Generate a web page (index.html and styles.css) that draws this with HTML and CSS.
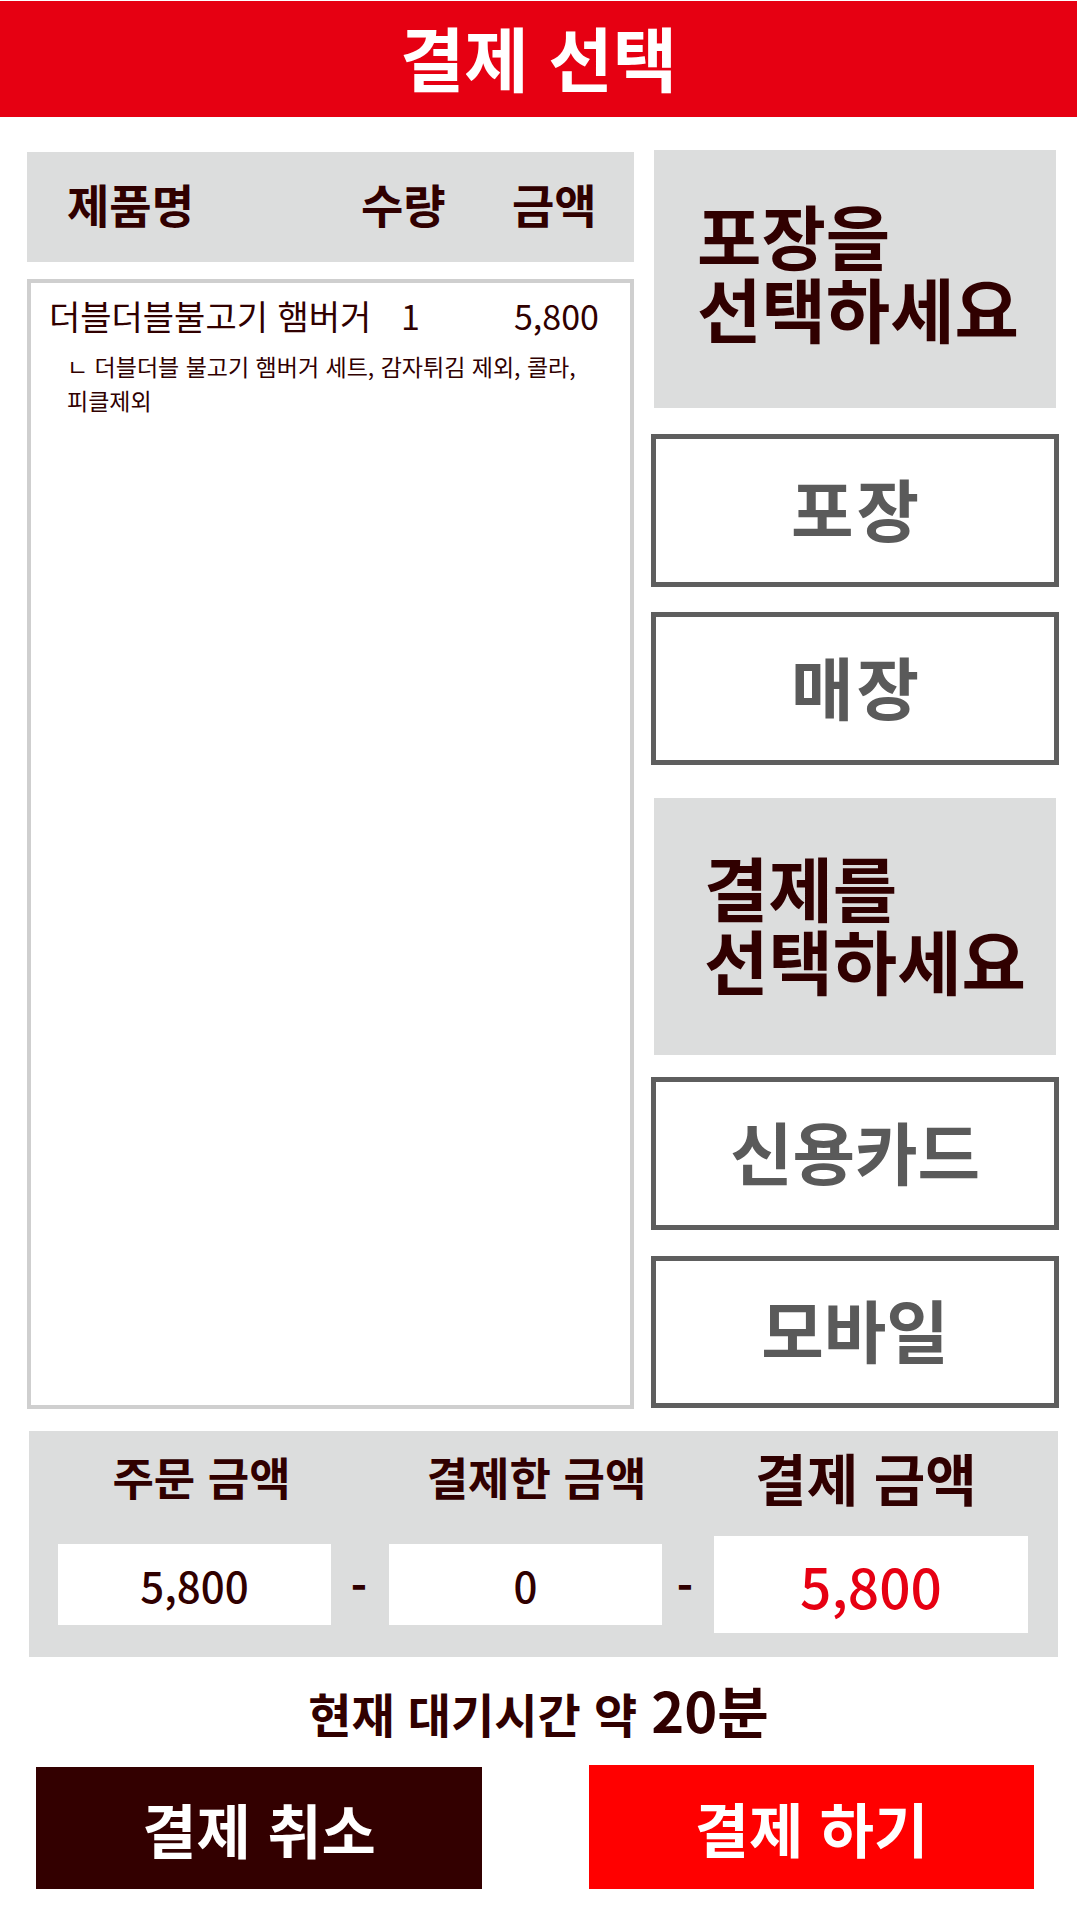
FILE: index.html
```html
<!DOCTYPE html>
<html lang="ko">
<head>
<meta charset="utf-8">
<title>결제 선택</title>
<link rel="stylesheet" href="styles.css">
</head>
<body>
<header class="topbar"><h1 class="title">결제 선택</h1></header>

<main class="main">
  <section class="order">
    <div class="thead">
      <span class="th-name">제품명</span>
      <span class="th-qty">수량</span>
      <span class="th-amt">금액</span>
    </div>
    <div class="list">
      <div class="item">
        <span class="it-name">더블더블불고기 햄버거</span>
        <span class="it-qty">1</span>
        <span class="it-amt">5,800</span>
      </div>
      <p class="item-sub">ㄴ 더블더블 불고기 햄버거 세트, 감자튀김 제외, 콜라, 피클제외</p>
    </div>
  </section>

  <section class="choices">
    <div class="prompt prompt-1">
      <span class="pl">포장을</span>
      <span class="pl">선택하세요</span>
    </div>
    <button class="opt opt-1">포장</button>
    <button class="opt opt-2">매장</button>
    <div class="prompt prompt-2">
      <span class="pl">결제를</span>
      <span class="pl">선택하세요</span>
    </div>
    <button class="opt opt-3">신용카드</button>
    <button class="opt opt-4">모바일</button>
  </section>
</main>

<section class="summary">
  <div class="lbl lbl-a">주문 금액</div>
  <div class="lbl lbl-b">결제한 금액</div>
  <div class="lbl lbl-c">결제 금액</div>
  <div class="val val-1">5,800</div>
  <div class="minus m1">-</div>
  <div class="val val-2">0</div>
  <div class="minus m2">-</div>
  <div class="val val-3">5,800</div>
</section>

<div class="wait"><span class="wait-txt">현재 대기시간 약</span> <span class="wait-big">20분</span></div>

<div class="actions">
  <button class="act act-cancel">결제 취소</button>
  <button class="act act-pay">결제 하기</button>
</div>
</body>
</html>
```

FILE: styles.css
```css
* { box-sizing: border-box; }
html, body { margin: 0; padding: 0; background: #ffffff; }
body {
  width: 1077px;
  font-family: "Noto Sans CJK KR", "Noto Sans", sans-serif;
  color: #300000;
}
button { font-family: inherit; cursor: pointer; padding: 0; }

.topbar {
  height: 116px;
  margin-top: 1px;
  padding-bottom: 4px;
  background: #e60012;
  display: flex;
  align-items: center;
  justify-content: center;
}
.title {
  margin: 0;
  color: #ffffff;
  font-size: 70px;
  font-weight: 700;
  line-height: 1;
}

.main {
  display: flex;
  gap: 17px;
  padding: 33px 0 0 27px;
}
.order {
  width: 607px;
  padding-top: 2px;
  display: flex;
  flex-direction: column;
  gap: 17px;
}
.thead {
  height: 110px;
  background: #dcdddd;
  display: grid;
  grid-template-columns: 294px 151px 1fr;
  align-items: center;
  padding: 0 0 8px 40px;
  font-size: 46px;
  font-weight: 700;
  line-height: 1;
}
.list {
  height: 1130px;
  border: 4px solid #cfcfcf;
  padding: 12px 0 0 18px;
}
.item {
  display: grid;
  grid-template-columns: 352px 113px 1fr;
  align-items: center;
  font-size: 34px;
  line-height: 42px;
}
.item-sub {
  margin: 12px 0 0 18px;
  width: 560px;
  font-size: 23px;
  line-height: 34px;
  word-break: keep-all;
}

.choices {
  width: 408px;
  display: flex;
  flex-direction: column;
}
.prompt {
  height: 258px;
  margin: 0 3px;
  background: #dcdddd;
  display: flex;
  flex-direction: column;
  justify-content: center;
  font-size: 70px;
  font-weight: 700;
}
.pl {
  display: block;
  height: 73px;
  line-height: 73px;
}
.prompt-1 { padding: 0 0 16px 43px; }
.prompt-2 { padding: 0 0 8px 50px; margin-top: 33px; height: 257px; }
.opt {
  height: 153px;
  background: #ffffff;
  border: 5px solid #5e5e5e;
  padding-bottom: 6px;
  color: #5a5a5a;
  font-size: 68px;
  font-weight: 700;
  line-height: 1;
  letter-spacing: 3px;
  text-indent: 3px;
}
.opt-1 { margin-top: 26px; }
.opt-2 { margin-top: 25px; }
.opt-3 { margin-top: 22px; letter-spacing: 0; text-indent: 0; }
.opt-4 { margin-top: 26px; height: 152px; letter-spacing: 0; text-indent: 0; }

.summary {
  width: 1029px;
  margin: 22px 0 0 29px;
  background: #dcdddd;
  padding: 0 30px 24px 29px;
  display: grid;
  grid-template-columns: 273px 58px 273px 52px 314px;
  grid-template-rows: 105px 97px;
  grid-template-areas:
    "a . b . c"
    "v1 m1 v2 m2 v3";
  align-items: center;
}
.lbl {
  text-align: center;
  font-size: 45px;
  font-weight: 700;
  line-height: 1;
  white-space: nowrap;
  padding-bottom: 14px;
}
.lbl-a { grid-area: a; padding-left: 14px; }
.lbl-b { grid-area: b; padding-left: 22px; }
.lbl-c { grid-area: c; font-size: 56px; padding-right: 10px; }
.val {
  background: #ffffff;
  height: 81px;
  display: flex;
  align-items: center;
  justify-content: center;
  font-size: 42px;
  font-weight: 500;
}
.val-1 { grid-area: v1; }
.val-2 { grid-area: v2; }
.val-3 { grid-area: v3; height: 97px; color: #e60012; font-size: 55px; }
.minus {
  text-align: center;
  font-size: 44px;
  font-weight: 700;
  line-height: 1;
}
.m1 { grid-area: m1; padding-right: 2px; }
.m2 { grid-area: m2; padding-right: 6px; }

.wait {
  height: 108px;
  display: flex;
  align-items: baseline;
  justify-content: center;
  gap: 14px;
  padding-top: 22px;
  font-weight: 700;
  line-height: 60px;
}
.wait-txt { font-size: 47px; }
.wait-big { font-size: 56px; }

.actions {
  display: flex;
  align-items: flex-end;
  gap: 107px;
  padding-left: 36px;
}
.act {
  border: 0;
  color: #ffffff;
  font-size: 59px;
  font-weight: 700;
  line-height: 1;
}
.act-cancel { width: 446px; height: 122px; background: #330000; }
.act-pay { width: 445px; height: 124px; background: #ff0000; }
```
